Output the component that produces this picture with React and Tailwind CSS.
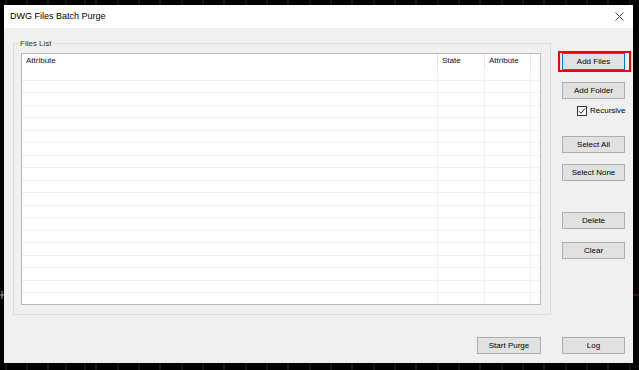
import React from 'react'

const rows = Array.from({ length: 19 }, (_, i) => i)

function Btn({ children, primary }) {
  return (
    <button
      className={
        primary
          ? 'block w-[63px] h-[17px] bg-[#e1e1e1] border border-[#0078d7] text-[8px] leading-none text-black'
          : 'block w-[63px] h-[17px] bg-[#e1e1e1] border border-[#adadad] text-[8px] leading-none text-black'
      }
    >
      {children}
    </button>
  )
}

function Backdrop() {
  // faint cad grid behind the dialog
  const xs = [6, 27, 48, 66, 85, 96, 118, 139, 160, 182, 203, 224, 246, 267, 288, 310, 331, 352, 374, 395, 416, 438, 459, 480, 502, 523, 544, 566, 587, 608, 630]
  return (
    <svg className="absolute inset-0" width="639" height="370">
      {xs.map((x) => (
        <line key={x} x1={x} y1="0" x2={x} y2="370" stroke="#2a2a2a" strokeWidth="1" />
      ))}
      <line x1="0" y1="295" x2="6" y2="295" stroke="#9a9a9a" />
      <line x1="2" y1="291" x2="2" y2="299" stroke="#9a9a9a" />
      <line x1="633" y1="295" x2="639" y2="295" stroke="#7a1f1f" />
    </svg>
  )
}

export default function App() {
  return (
    <div className="relative w-[639px] h-[370px] bg-black overflow-hidden font-['Liberation_Sans',Arial,sans-serif]">
      <Backdrop />
      <div className="relative pl-[4px] pt-[5px]">
        <div className="w-[629px] h-[358px] bg-[#f0f0f0] flex flex-col">
          {/* title bar */}
          <div className="h-[23px] shrink-0 bg-white flex items-center justify-between pl-[6px] pr-[9px]">
            <span className="text-[9px] leading-none text-black">DWG Files Batch Purge</span>
            <svg width="9" height="9" viewBox="0 0 9 9">
              <path d="M0.5 0.5L8.5 8.5M8.5 0.5L0.5 8.5" stroke="#444" strokeWidth="1" fill="none" />
            </svg>
          </div>

          {/* body */}
          <div className="flex pl-[9px] pt-[15px] leading-none">
            <div className="w-[538px] flex flex-col">
              <div className="relative h-[272px] border border-[#dcdcdc] pt-[9px] pl-[7px]">
                <span className="absolute left-[5px] top-[-6px] bg-[#f0f0f0] px-[1px] text-[8px] leading-[11px] text-[#333]">
                  Files List
                </span>
                <div className="w-[520px] h-[252px] border border-[#b9b9b9] bg-white flex flex-col overflow-hidden">
                  <div className="h-[14px] flex shrink-0 text-[8px] text-[#111]">
                    <div className="w-[416px] border-r border-[#e5e5e5] pl-[4px] flex items-center">Attribute</div>
                    <div className="w-[47px] border-r border-[#e5e5e5] pl-[4px] flex items-center">State</div>
                    <div className="w-[46px] border-r border-[#e5e5e5] pl-[4px] flex items-center">Attribute</div>
                    <div className="flex-1" />
                  </div>
                  {rows.map((i) => (
                    <div
                      key={i}
                      className={
                        i % 2 === 0
                          ? 'h-[13px] shrink-0 flex border-b border-[#f0f0f0]'
                          : 'h-[12px] shrink-0 flex border-b border-[#f0f0f0]'
                      }
                    >
                      <div className="w-[416px] border-r border-[#f0f0f0]" />
                      <div className="w-[47px] border-r border-[#f0f0f0]" />
                      <div className="w-[46px] border-r border-[#f0f0f0]" />
                      <div className="flex-1" />
                    </div>
                  ))}
                </div>
              </div>
              <div className="mt-[22px] pr-[10px] flex justify-end">
                <button className="block w-[64px] h-[17px] bg-[#e1e1e1] border border-[#adadad] text-[8px] leading-none text-black">
                  Start Purge
                </button>
              </div>
            </div>

            <div className="ml-[11px] w-[63px] flex flex-col">
              <div className="relative mt-[10px]">
                <Btn primary>Add Files</Btn>
                <div className="absolute -left-[4px] -top-[2px] w-[73px] h-[21px] border-2 border-[#f00000]" />
              </div>
              <div className="mt-[12px]">
                <Btn>Add Folder</Btn>
              </div>
              <div className="mt-[6px] h-[12px] flex items-center pl-[15px] gap-[3px]">
                <span className="w-[10px] h-[10px] border border-[#333] bg-white flex items-center justify-center">
                  <svg width="8" height="8" viewBox="0 0 8 8">
                    <path d="M1 4.2L3 6.2L7 1.5" stroke="#222" strokeWidth="1" fill="none" />
                  </svg>
                </span>
                <span className="text-[8px] text-black whitespace-nowrap">Recursive</span>
              </div>
              <div className="mt-[19px]">
                <Btn>Select All</Btn>
              </div>
              <div className="mt-[11px]">
                <Btn>Select None</Btn>
              </div>
              <div className="mt-[31px]">
                <Btn>Delete</Btn>
              </div>
              <div className="mt-[13px]">
                <Btn>Clear</Btn>
              </div>
              <div className="mt-[78px]">
                <Btn>Log</Btn>
              </div>
            </div>
          </div>
        </div>
      </div>
    </div>
  )
}
